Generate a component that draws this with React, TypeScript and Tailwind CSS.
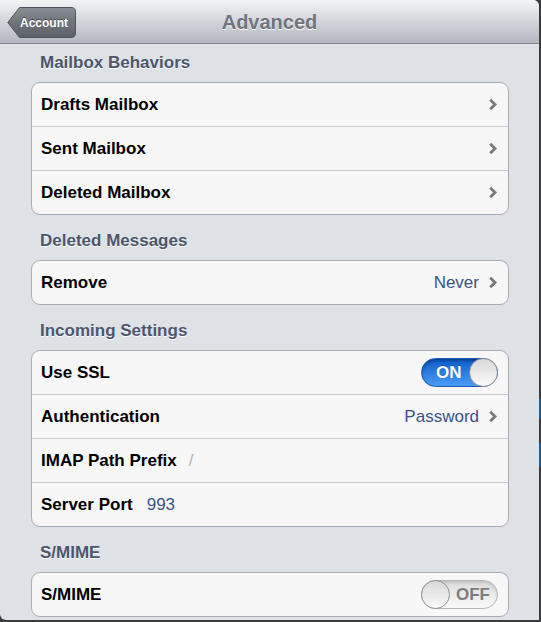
import React from "react";

const FONT = "font-['Liberation_Sans',Arial,Helvetica,sans-serif]";

function Chevron() {
  return (
    <svg width="10" height="13" viewBox="0 0 10 13" className="shrink-0">
      <path d="M2.2 1.8 L7 6.5 L2.2 11.2" fill="none" stroke="#7b7b7b" strokeWidth="2.9" />
    </svg>
  );
}

function BackButton() {
  return (
    <div className="absolute left-[7px] top-[7px] h-[31px] w-[69px]">
      <svg width="69" height="31" viewBox="0 0 69 31" className="absolute inset-0">
        <defs>
          <linearGradient id="bb" x1="0" y1="0" x2="0" y2="1">
            <stop offset="0" stopColor="#8a8f96" />
            <stop offset="0.5" stopColor="#6f747b" />
            <stop offset="1" stopColor="#5c6169" />
          </linearGradient>
        </defs>
        <path
          d="M12.5 0.5 H64 Q68.5 0.5 68.5 5 V26 Q68.5 30.5 64 30.5 H12.5 L0.8 15.5 Z"
          fill="url(#bb)"
          stroke="#50555c"
        />
      </svg>
      <span className="relative flex h-full items-center pl-[13px] text-[12px] font-bold text-white [text-shadow:0_-1px_0_rgba(0,0,0,0.45)]">
        Account
      </span>
    </div>
  );
}

function Header({ title, first }: { title: string; first?: boolean }) {
  return (
    <div
      className={`${first ? "pt-[9px]" : "pt-[16px]"} pb-[9px] pl-[40px] text-[17px] font-bold leading-[20px] text-[#4c566c] [text-shadow:0_1px_0_#ffffff]`}
    >
      {title}
    </div>
  );
}

function Group({ children }: { children: React.ReactNode }) {
  return (
    <div className="ml-[31px] w-[478px] overflow-hidden rounded-[9px] border border-[#a9acb2] bg-[#f7f7f7]">
      {children}
    </div>
  );
}

function Row({ label, first, children }: { label: string; first?: boolean; children?: React.ReactNode }) {
  return (
    <div
      className={`flex items-center pl-[9px] ${first ? "h-[43px]" : "h-[44px] border-t border-[#cbcbcd]"}`}
    >
      <span className="text-[17px] font-bold text-black">{label}</span>
      {children}
    </div>
  );
}

function Nav({ value }: { value?: string }) {
  return (
    <div className="ml-auto flex items-center gap-[9px] pr-[10px]">
      {value && <span className="text-[17px] text-[#385487]">{value}</span>}
      <Chevron />
    </div>
  );
}

function Toggle({ on }: { on: boolean }) {
  if (on) {
    return (
      <div className="relative ml-auto mr-[10px] h-[29px] w-[77px] rounded-full border border-[#1c58b0] bg-gradient-to-b from-[#0a5ccc] to-[#4a9cf5] shadow-[inset_0_2px_3px_rgba(0,0,0,0.3)]">
        <span className="absolute left-[14px] top-0 flex h-full items-center text-[17px] font-bold text-white [text-shadow:0_-1px_0_rgba(0,0,0,0.3)]">
          ON
        </span>
        <div className="absolute right-[-1px] top-[-1px] h-[29px] w-[29px] rounded-full border border-[#8d9196] bg-gradient-to-b from-[#d8d8d8] to-[#fbfbfb]" />
      </div>
    );
  }
  return (
    <div className="relative ml-auto mr-[10px] h-[29px] w-[77px] rounded-full border border-[#b4b4b4] bg-gradient-to-b from-[#dcdcdc] to-[#fafafa] shadow-[inset_0_2px_3px_rgba(0,0,0,0.12)]">
      <span className="absolute left-[34px] top-0 flex h-full items-center text-[17px] font-bold text-[#7d7d7d]">
        OFF
      </span>
      <div className="absolute left-[-1px] top-[-1px] h-[29px] w-[29px] rounded-full border border-[#8d9196] bg-gradient-to-b from-[#d8d8d8] to-[#fbfbfb]" />
    </div>
  );
}

export default function App() {
  return (
    <div className={`flex h-[622px] w-[541px] items-start bg-[#3b3c3e] ${FONT}`}>
      <div className="flex h-[620px] w-[539px] flex-col overflow-hidden rounded-tr-[6px] rounded-bl-[6px] bg-[#dee1e6]">
        <div className="relative flex h-[44px] shrink-0 items-center justify-center border-b border-[#7d8390] bg-gradient-to-b from-[#f3f4f6] to-[#b3b7c1]">
          <BackButton />
          <h1 className="text-[20px] font-bold text-[#6f747d] [text-shadow:0_1px_0_#ffffff]">Advanced</h1>
        </div>

        <Header title="Mailbox Behaviors" first />
        <Group>
          <Row label="Drafts Mailbox" first>
            <Nav />
          </Row>
          <Row label="Sent Mailbox">
            <Nav />
          </Row>
          <Row label="Deleted Mailbox">
            <Nav />
          </Row>
        </Group>

        <Header title="Deleted Messages" />
        <Group>
          <Row label="Remove" first>
            <Nav value="Never" />
          </Row>
        </Group>

        <Header title="Incoming Settings" />
        <Group>
          <Row label="Use SSL" first>
            <Toggle on />
          </Row>
          <Row label="Authentication">
            <Nav value="Password" />
          </Row>
          <Row label="IMAP Path Prefix">
            <span className="ml-[12px] text-[17px] text-[#b3b3b3]">/</span>
          </Row>
          <Row label="Server Port">
            <span className="ml-[14px] text-[17px] text-[#385487]">993</span>
          </Row>
        </Group>

        <Header title="S/MIME" />
        <Group>
          <Row label="S/MIME" first>
            <Toggle on={false} />
          </Row>
        </Group>
      </div>
      <div className="flex h-[622px] w-[2px] flex-col">
        <div className="h-[399px]" />
        <div className="h-[20px] bg-[#1a5aa0]" />
        <div className="h-[24px]" />
        <div className="h-[24px] bg-[#1a5aa0]" />
      </div>
    </div>
  );
}
